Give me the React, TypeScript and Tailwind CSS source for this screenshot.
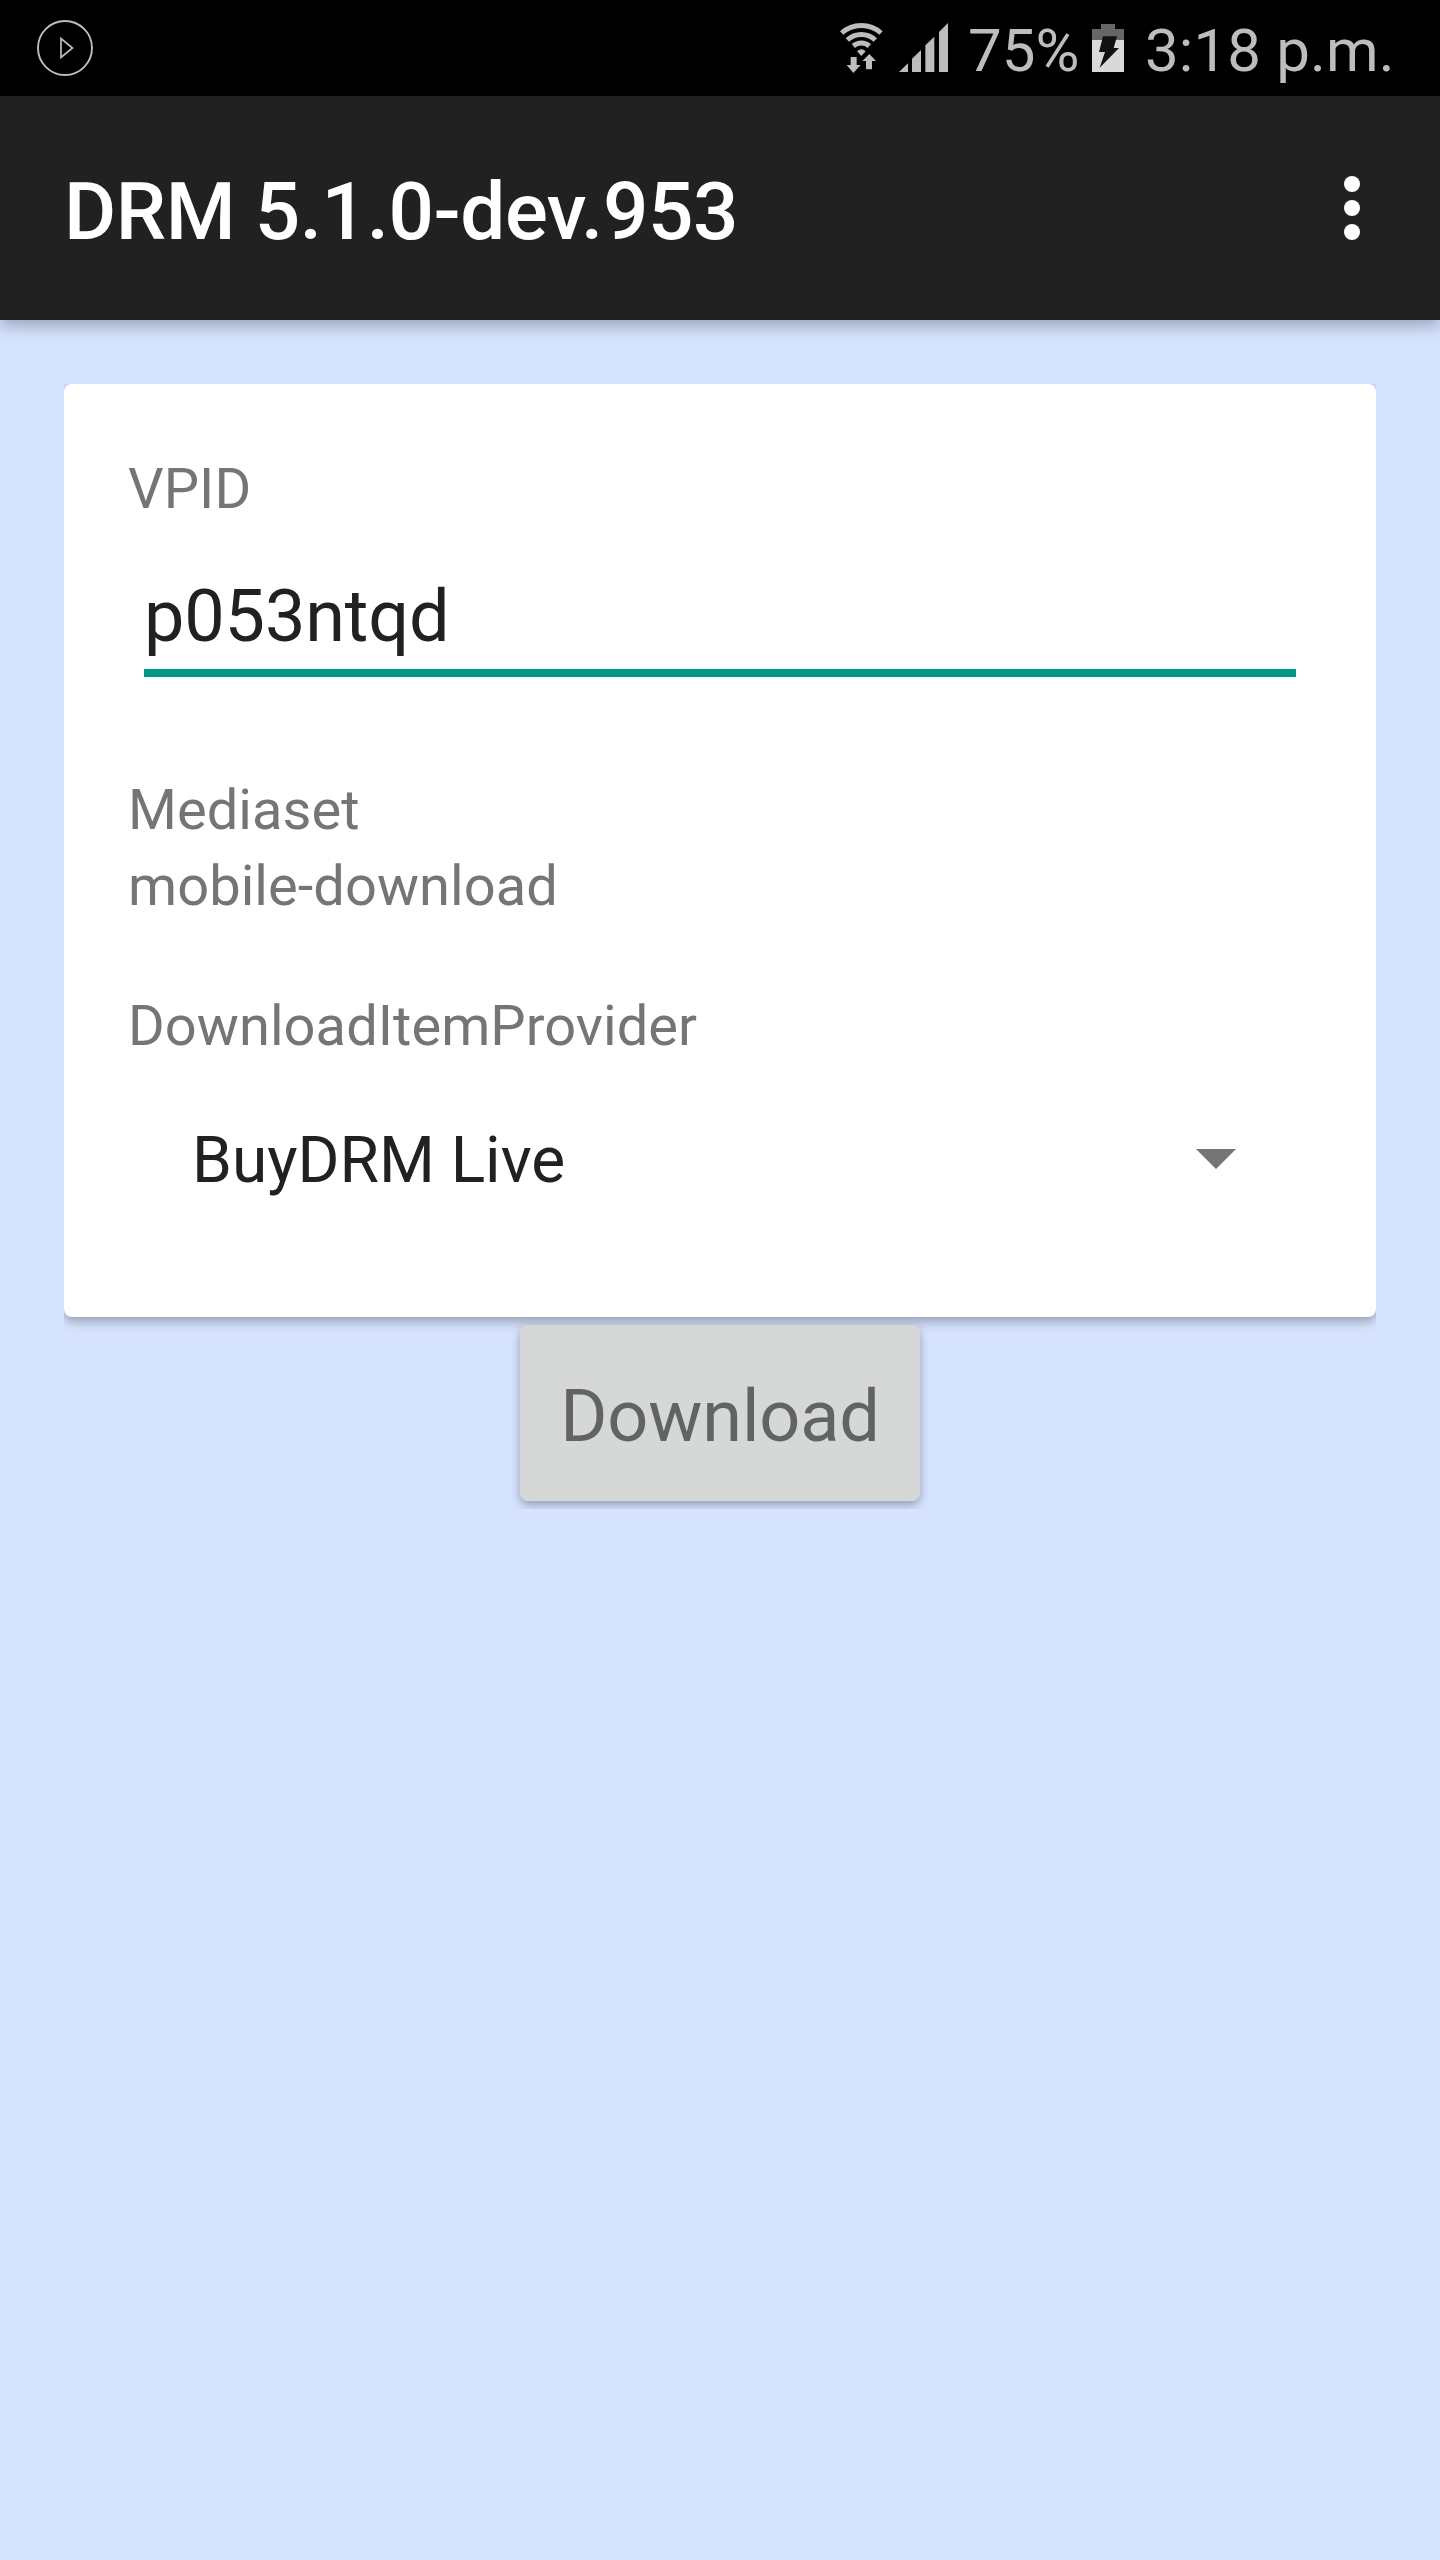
function PlayBadge() {
  return (
    <svg className="h-[58px] w-[58px]" viewBox="0 0 58 58" fill="none" stroke="#bdbdbd">
      <circle cx="29" cy="29" r="27" strokeWidth="1.9" />
      <path d="M25 19.5V38.5L36.5 29Z" strokeWidth="1.7" />
    </svg>
  );
}

function WifiIcon() {
  return (
    <svg className="mt-[22px] h-[51px] w-[43px] shrink-0" viewBox="60 66 129 153" fill="#bdbdbd">
      <g fill="none" stroke="#bdbdbd" strokeWidth="15">
        <path d="M65 99A88.5 88.5 0 0 1 183 99" />
        <path d="M82 120A62 62 0 0 1 166 120" />
        <path d="M100 138A37 37 0 0 1 148 138" />
      </g>
      <path d="M111 154Q124 142 137 154L124 168Z" />
      <path d="M92 171H110V195H122L100 219L80 195H92Z" />
      <path d="M148 162L168 183H156V208H138V183H127Z" />
    </svg>
  );
}

function SignalIcon() {
  return (
    <svg className="mt-[23px] ml-4 h-[49px] w-[49px] shrink-0" viewBox="237 69 147 147" fill="#bdbdbd">
      <path d="M237 216L264 190V216Z" />
      <path d="M276 216V176L303 150V216Z" />
      <path d="M316 216V136L343 110V216Z" />
      <path d="M357 216V96L384 69V216Z" />
    </svg>
  );
}

function BatteryIcon() {
  return (
    <svg className="mt-6 ml-[14px] h-12 w-8 shrink-0" viewBox="816 72 96 144">
      <path d="M843 72H885V87H912V120H816V87H843Z" fill="#666666" />
      <path d="M816 120H912V216H816Z" fill="#d9d9d9" />
      <path d="M849 109H891L881 144H897L839 203L855 156H837Z" fill="#111111" />
    </svg>
  );
}

function StatusBar() {
  return (
    <div className="flex h-24 items-start bg-black text-[60px] leading-[72px] text-[#bdbdbd]">
      <div className="mt-[19px] ml-9 flex-1">
        <PlayBadge />
      </div>
      <WifiIcon />
      <SignalIcon />
      <span className="mt-[15px] ml-5 w-[110px] whitespace-nowrap">75%</span>
      <BatteryIcon />
      <span className="mt-[15px] ml-[21px] w-[295px] tracking-[0.12px] whitespace-nowrap">3:18 p.m.</span>
    </div>
  );
}

function AppBar() {
  return (
    <header className="relative flex h-56 items-start justify-between bg-[#212121] pr-20 pl-16 shadow-[0_5px_16px_rgba(0,0,0,0.3)]">
      <h1 className="mt-[69px] text-[80px] leading-[94px] font-medium tracking-[-0.42px] whitespace-nowrap text-white">
        DRM 5.1.0-dev.953
      </h1>
      <button className="mt-20 flex flex-col gap-2" aria-label="More options">
        <span className="size-4 rounded-full bg-white" />
        <span className="size-4 rounded-full bg-white" />
        <span className="size-4 rounded-full bg-white" />
      </button>
    </header>
  );
}

export default function App() {
  return (
    <div className="h-[2560px] w-[1440px] overflow-hidden bg-[#d6e3ff] font-['Roboto',sans-serif]">
      <StatusBar />
      <AppBar />
      <main className="flex flex-col items-center px-16 pt-16">
        <section className="h-[933px] w-full rounded-lg bg-white px-16 pt-[67px] text-[56px] leading-[76px] tracking-[0.06px] text-[#757575] shadow-[0_4px_12px_rgba(0,0,0,0.33)] [clip-path:inset(0_0_-24px_0)]">
          <div>VPID</div>
          <div className="mx-4 mt-12 h-[102px] border-b-8 border-[#009788] text-[72px] leading-[84px] tracking-[-0.15px] text-[#212121]">
            p053ntqd
          </div>
          <div className="mt-[95px]">Mediaset</div>
          <div>mobile-download</div>
          <div className="mt-16">DownloadItemProvider</div>
          <div className="mt-[59px] flex items-start justify-between pr-[76px] pl-16 text-[64px] tracking-normal text-[#212121]">
            <span>BuyDRM Live</span>
            <svg className="mt-[26px] h-5 w-10" viewBox="0 0 40 20" fill="#757575">
              <path d="M0 0H40L20 20Z" />
            </svg>
          </div>
        </section>
        <button className="relative mt-2 h-44 w-[400px] rounded-lg bg-[#d6d8d7] pt-2 text-[72px] leading-[84px] tracking-[-0.1px] text-[#626463] shadow-[0_4px_10px_rgba(0,0,0,0.3)] [clip-path:inset(-8px_-8px_-8px_-8px)]">
          Download
        </button>
      </main>
    </div>
  );
}
